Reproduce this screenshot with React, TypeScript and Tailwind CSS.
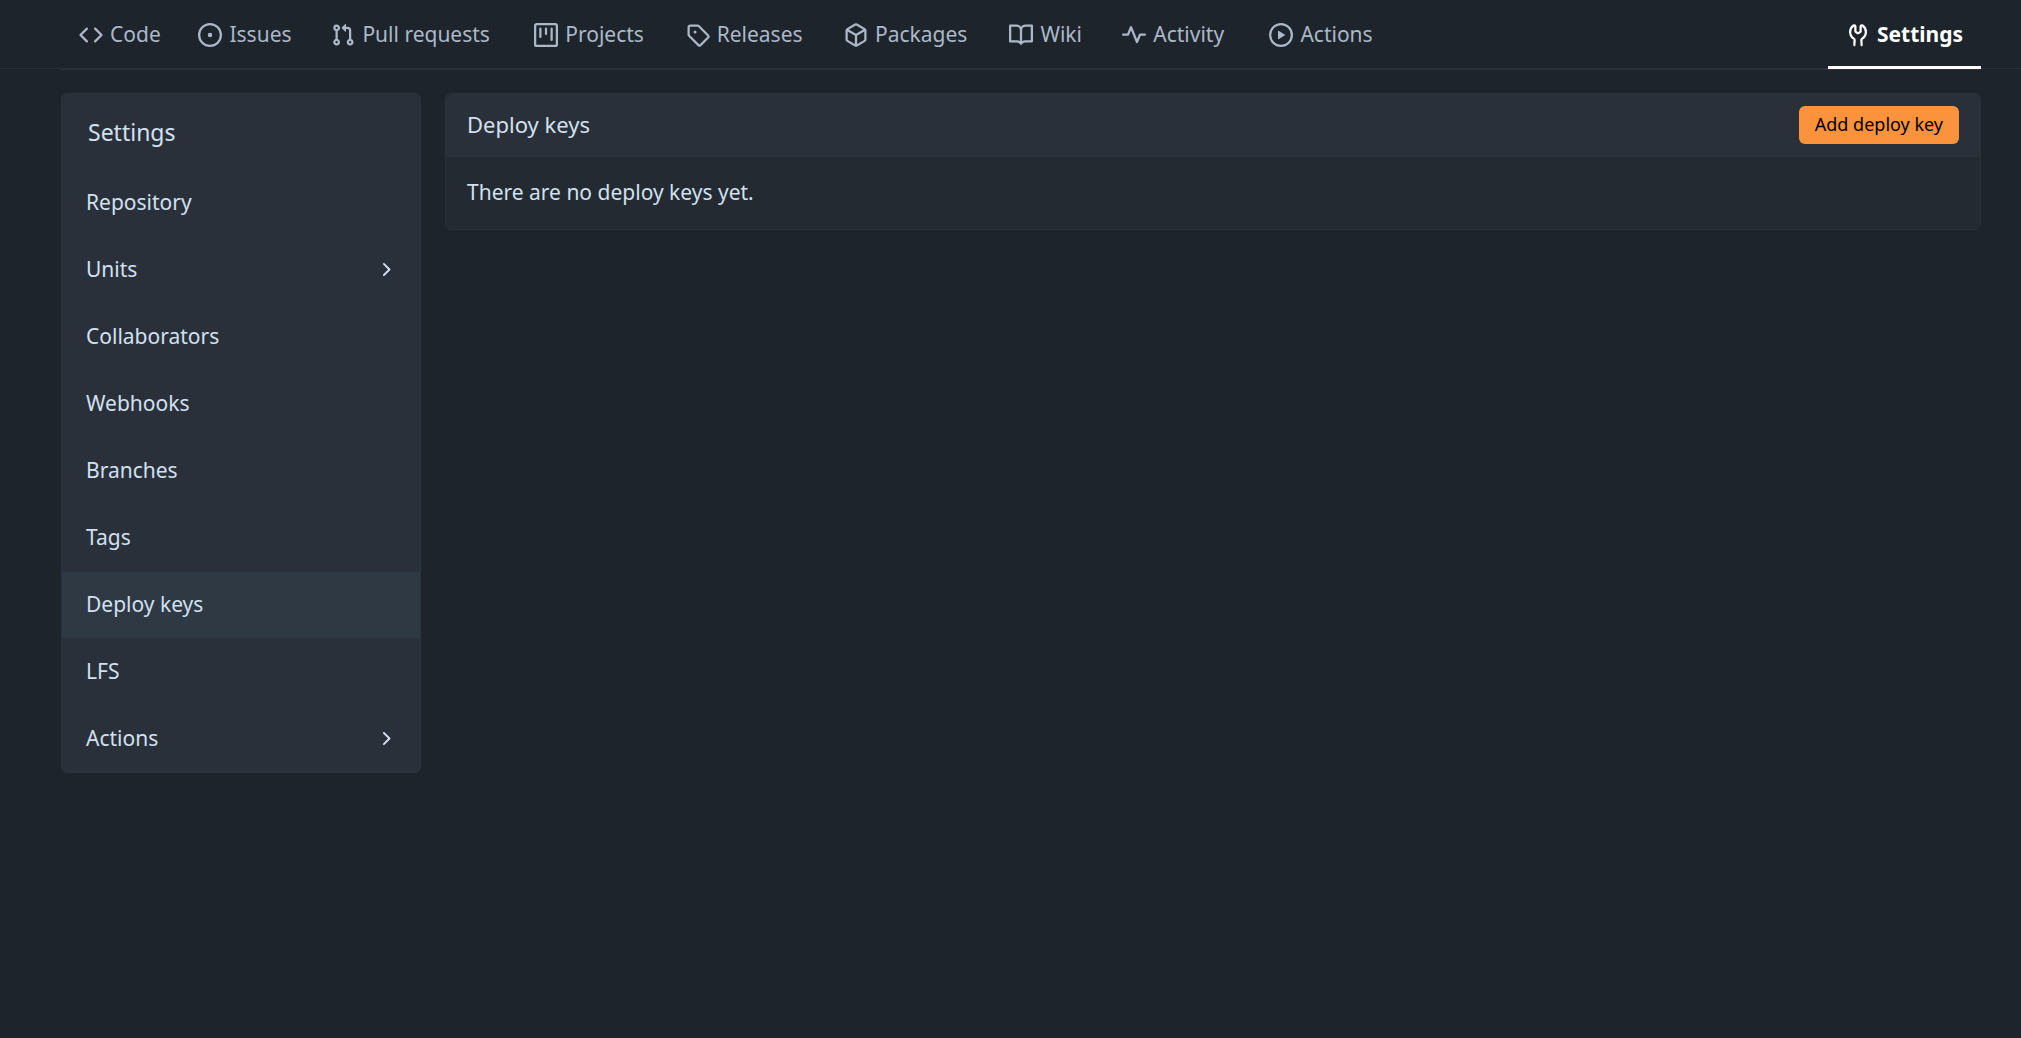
import React from "react";

const icons = {
  code: "m11.28 3.22 4.25 4.25a.75.75 0 0 1 0 1.06l-4.25 4.25a.749.749 0 0 1-1.275-.326.749.749 0 0 1 .215-.734L13.94 8l-3.72-3.72a.749.749 0 0 1 .326-1.275.749.749 0 0 1 .734.215Zm-6.56 0a.751.751 0 0 1 1.042.018.751.751 0 0 1 .018 1.042L2.06 8l3.72 3.72a.749.749 0 0 1-.326 1.275.749.749 0 0 1-.734-.215L.47 8.53a.75.75 0 0 1 0-1.06Z",
  issue:
    "M8 9.5a1.5 1.5 0 1 0 0-3 1.5 1.5 0 0 0 0 3ZM8 0a8 8 0 1 1 0 16A8 8 0 0 1 8 0ZM1.5 8a6.5 6.5 0 1 0 13 0 6.5 6.5 0 0 0-13 0Z",
  pull: "M1.5 3.25a2.25 2.25 0 1 1 3 2.122v5.256a2.251 2.251 0 1 1-1.5 0V5.372A2.25 2.25 0 0 1 1.5 3.25Zm5.677-.177L9.573.677A.25.25 0 0 1 10 .854V2.5h1A2.5 2.5 0 0 1 13.5 5v5.628a2.251 2.251 0 1 1-1.5 0V5a1 1 0 0 0-1-1h-1v1.646a.25.25 0 0 1-.427.177L7.177 3.427a.25.25 0 0 1 0-.354ZM3.75 2.5a.75.75 0 1 0 0 1.5.75.75 0 0 0 0-1.5Zm0 9.5a.75.75 0 1 0 0 1.5.75.75 0 0 0 0-1.5Zm8.25.75a.75.75 0 1 0 1.5 0 .75.75 0 0 0-1.5 0Z",
  project:
    "M1.75 0h12.5C15.216 0 16 .784 16 1.75v12.5A1.75 1.75 0 0 1 14.25 16H1.75A1.75 1.75 0 0 1 0 14.25V1.75C0 .784.784 0 1.75 0ZM1.5 1.75v12.5c0 .138.112.25.25.25h12.5a.25.25 0 0 0 .25-.25V1.75a.25.25 0 0 0-.25-.25H1.75a.25.25 0 0 0-.25.25ZM11.75 3a.75.75 0 0 1 .75.75v7.5a.75.75 0 0 1-1.5 0v-7.5a.75.75 0 0 1 .75-.75Zm-8.25.75a.75.75 0 0 1 1.5 0v5.5a.75.75 0 0 1-1.5 0ZM8 3a.75.75 0 0 1 .75.75v3.5a.75.75 0 0 1-1.5 0v-3.5A.75.75 0 0 1 8 3Z",
  tag: "M1 7.775V2.75C1 1.784 1.784 1 2.75 1h5.025c.464 0 .91.184 1.238.513l6.25 6.25a1.75 1.75 0 0 1 0 2.474l-5.026 5.026a1.75 1.75 0 0 1-2.474 0l-6.25-6.25A1.752 1.752 0 0 1 1 7.775Zm1.5 0c0 .066.026.13.073.177l6.25 6.25a.25.25 0 0 0 .354 0l5.025-5.025a.25.25 0 0 0 0-.354l-6.25-6.25a.25.25 0 0 0-.177-.073H2.75a.25.25 0 0 0-.25.25ZM6 5a1 1 0 1 1 0 2 1 1 0 0 1 0-2Z",
  pkg: "m8.878.392 5.25 3.045c.54.314.872.89.872 1.514v6.098a1.75 1.75 0 0 1-.872 1.514l-5.25 3.045a1.75 1.75 0 0 1-1.756 0l-5.25-3.045A1.75 1.75 0 0 1 1 11.049V4.951c0-.624.332-1.201.872-1.514L7.122.392a1.75 1.75 0 0 1 1.756 0ZM7.875 1.69l-4.63 2.685L8 7.133l4.755-2.758-4.63-2.685a.248.248 0 0 0-.25 0ZM2.5 5.677v5.372c0 .09.047.171.125.216l4.625 2.683V8.432Zm6.25 8.271 4.625-2.683a.25.25 0 0 0 .125-.216V5.677L8.75 8.432Z",
  book: "M0 1.75A.75.75 0 0 1 .75 1h4.253c1.227 0 2.317.59 3 1.501A3.743 3.743 0 0 1 11.006 1h4.245a.75.75 0 0 1 .75.75v10.5a.75.75 0 0 1-.75.75h-4.507a2.25 2.25 0 0 0-1.591.659l-.622.621a.75.75 0 0 1-1.06 0l-.622-.621A2.25 2.25 0 0 0 5.258 13H.75a.75.75 0 0 1-.75-.75Zm7.251 10.324.004-5.073-.002-2.253A2.25 2.25 0 0 0 5.003 2.5H1.5v9h3.757a3.75 3.75 0 0 1 1.994.574ZM8.755 4.75l-.004 7.322a3.752 3.752 0 0 1 1.992-.572H14.5v-9h-3.495a2.25 2.25 0 0 0-2.25 2.25Z",
  pulse:
    "M6 2c.306 0 .582.187.696.471L10 10.731l1.304-3.26A.751.751 0 0 1 12 7h3.25a.75.75 0 0 1 0 1.5h-2.742l-1.812 4.528a.751.751 0 0 1-1.392 0L6 4.77 4.696 8.03A.75.75 0 0 1 4 8.5H.75a.75.75 0 0 1 0-1.5h2.742l1.812-4.529A.751.751 0 0 1 6 2Z",
  play: "M8 0a8 8 0 1 1 0 16A8 8 0 0 1 8 0ZM1.5 8a6.5 6.5 0 1 0 13 0 6.5 6.5 0 0 0-13 0Zm4.879-2.773 4.264 2.559a.25.25 0 0 1 0 .428l-4.264 2.559A.25.25 0 0 1 6 10.559V5.442a.25.25 0 0 1 .379-.215Z",
  tools:
    "M5.433 2.304A4.494 4.494 0 0 0 3.5 6c0 1.598.832 3.002 2.09 3.802.518.328.929.923.902 1.64v.008l-.164 3.337a.75.75 0 1 1-1.498-.073l.163-3.33c.002-.085-.05-.216-.207-.316A5.996 5.996 0 0 1 2 6a5.993 5.993 0 0 1 2.567-4.92 1.482 1.482 0 0 1 1.673-.04c.462.296.76.827.76 1.423v2.82c0 .082.041.16.11.206l.75.51a.25.25 0 0 0 .28 0l.75-.51A.249.249 0 0 0 9 5.282V2.463c0-.596.298-1.127.76-1.423a1.482 1.482 0 0 1 1.673.04A5.993 5.993 0 0 1 14 6a5.996 5.996 0 0 1-2.786 5.068c-.157.1-.209.23-.207.315l.163 3.33a.752.752 0 0 1-1.094.714.75.75 0 0 1-.404-.64l-.164-3.345c-.027-.717.384-1.312.902-1.64A4.495 4.495 0 0 0 12.5 6a4.494 4.494 0 0 0-1.933-3.696c-.024.017-.067.067-.067.159v2.82c0 .58-.287 1.122-.767 1.448l-.75.51a1.75 1.75 0 0 1-1.966 0l-.75-.51A1.75 1.75 0 0 1 5.5 5.282V2.463c0-.092-.043-.142-.067-.159Z",
  chevron:
    "M6.22 3.22a.75.75 0 0 1 1.06 0l4.25 4.25a.75.75 0 0 1 0 1.06l-4.25 4.25a.751.751 0 0 1-1.042-.018.751.751 0 0 1-.018-1.042L9.94 8 6.22 4.28a.75.75 0 0 1 0-1.06Z",
};

type IconName = keyof typeof icons;

function Icon({ name, className }: { name: IconName; className: string }) {
  return (
    <svg viewBox="0 0 16 16" fill="currentColor" aria-hidden="true" className={className}>
      <path d={icons[name]} />
    </svg>
  );
}

const tabs: { label: string; icon: IconName }[] = [
  { label: "Code", icon: "code" },
  { label: "Issues", icon: "issue" },
  { label: "Pull requests", icon: "pull" },
  { label: "Projects", icon: "project" },
  { label: "Releases", icon: "tag" },
  { label: "Packages", icon: "pkg" },
  { label: "Wiki", icon: "book" },
  { label: "Activity", icon: "pulse" },
  { label: "Actions", icon: "play" },
];

const settings: { label: string; nested?: boolean; active?: boolean }[] = [
  { label: "Repository" },
  { label: "Units", nested: true },
  { label: "Collaborators" },
  { label: "Webhooks" },
  { label: "Branches" },
  { label: "Tags" },
  { label: "Deploy keys", active: true },
  { label: "LFS" },
  { label: "Actions", nested: true },
];

// The hidden bold copy keeps a tab's width the same when it becomes active.
function TabLabel({ text }: { text: string }) {
  return (
    <span
      data-text={text}
      className="pb-0.5 before:invisible before:block before:h-0 before:font-bold before:content-[attr(data-text)]"
    >
      {text}
    </span>
  );
}

export default function App() {
  return (
    <div className="min-h-screen bg-[#1e242b] font-['Noto_Sans',sans-serif] text-[21px] leading-7 text-[#d2e0f0]">
      <header className="border-b border-[#2a313a] pr-10 pl-[61px]">
        <nav className="-mb-0.5 flex items-stretch border-b border-[#2a313a] text-[#abb8c8]">
          {tabs.map((t) => (
            <a key={t.label} href="#" className="flex h-[69px] items-center gap-[7px] px-[18px] pt-px">
              <Icon name={t.icon} className="size-6 shrink-0" />
              <TabLabel text={t.label} />
            </a>
          ))}
          <a
            href="#"
            aria-current="page"
            className="ml-auto flex h-[69px] items-center gap-[7px] border-b-3 border-white px-[18px] pt-1 font-bold text-white"
          >
            <Icon name="tools" className="size-6 shrink-0" />
            <TabLabel text="Settings" />
          </a>
        </nav>
      </header>

      <main className="flex items-start gap-6 pt-6 pr-10 pl-[61px]">
        <aside className="w-[360px] shrink-0 overflow-hidden rounded-md border border-[#2b323c] bg-[#2a303a]">
          <h2 className="px-[26px] pt-6 pb-[23px] text-[23px]">Settings</h2>
          <ul>
            {settings.map((s) => (
              <li key={s.label} className="border-t border-[#2a313b]">
                <a
                  href="#"
                  aria-current={s.active ? "page" : undefined}
                  className={
                    s.active
                      ? "flex h-[66px] items-center justify-between bg-[#2f3944] px-6 pb-0.5"
                      : "flex h-[66px] items-center justify-between px-6 pb-0.5"
                  }
                >
                  {s.label}
                  {s.nested && <Icon name="chevron" className="size-[21px] shrink-0" />}
                </a>
              </li>
            ))}
          </ul>
        </aside>

        <section className="min-w-0 flex-1 overflow-hidden rounded-md border border-[#2a313b] bg-[#232a31]">
          <div className="flex h-[63px] items-center justify-between bg-[#2a303a] px-[21px] pb-px">
            <h1 className="pb-0.5 text-[22px]">Deploy keys</h1>
            <button
              type="button"
              className="h-[38px] rounded-md bg-[#fb923c] px-4 pb-0.5 text-lg leading-6 text-black"
            >
              Add deploy key
            </button>
          </div>
          <p className="px-[21px] pt-[21px] pb-[23px]">There are no deploy keys yet.</p>
        </section>
      </main>
    </div>
  );
}
